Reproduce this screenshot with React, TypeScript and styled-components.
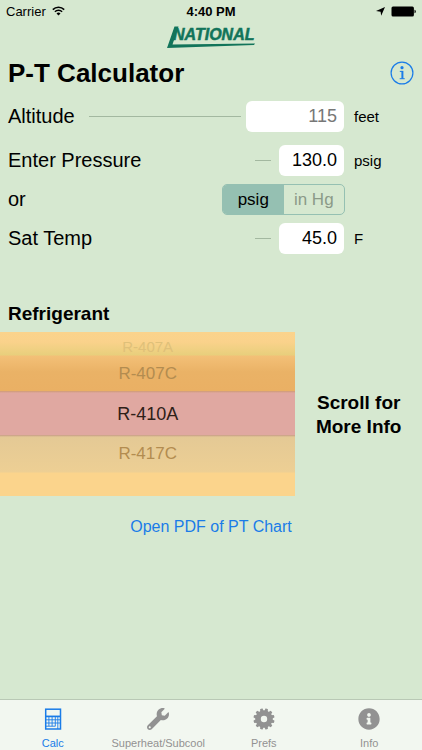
import React, { useState } from "react";
import styled, { createGlobalStyle, css } from "styled-components";
import { FaInfoCircle, FaLocationArrow, FaWrench } from "react-icons/fa";

const GlobalStyle = createGlobalStyle`
  *, *::before, *::after { box-sizing: border-box; }
  body {
    margin: 0;
    background: #d6e8d0;
    color: #000;
    font-family: "Liberation Sans", Arial, sans-serif;
  }
  button, input { font-family: inherit; }
`;

const Screen = styled.div`
  display: flex;
  flex-direction: column;
  min-height: 100vh;
`;

const StatusBar = styled.header`
  display: grid;
  grid-template-columns: 1fr auto 1fr;
  align-items: center;
  height: 22px;
  padding: 0 6px;
  font-size: 13px;
`;

const StatusGroup = styled.div<{ $end?: boolean }>`
  display: flex;
  align-items: center;
  gap: 6px;
  justify-content: ${(p) => (p.$end ? "flex-end" : "flex-start")};
`;

const Clock = styled.time`
  font-weight: 700;
`;

const Brand = styled.div`
  display: flex;
  justify-content: center;
  height: 28px;
`;

const Content = styled.main`
  display: flex;
  flex: 1;
  flex-direction: column;
`;

const TitleRow = styled.div`
  display: flex;
  align-items: center;
  justify-content: space-between;
  height: 46px;
  padding: 0 8px;
`;

const Title = styled.h1`
  margin: 0;
  font-size: 26px;
  line-height: 30px;
`;

const InfoButton = styled.button`
  display: flex;
  padding: 0;
  border: 0;
  background: none;
  color: #1a7ce8;
`;

const Form = styled.form`
  display: flex;
  flex-direction: column;
  gap: 8px;
  padding: 5px 0 0 8px;
`;

const Row = styled.div<{ $spaced?: boolean }>`
  display: flex;
  align-items: center;
  height: 31px;
  margin-bottom: ${(p) => (p.$spaced ? "5px" : "0")};
`;

const Label = styled.label`
  padding-bottom: 2px;
  font-size: 20px;
  line-height: 24px;
`;

const Rule = styled.span<{ $short?: boolean }>`
  height: 1px;
  background: #a3b8a0;
  ${(p) =>
    p.$short
      ? css`
          width: 16px;
          margin: 0 8px 0 auto;
        `
      : css`
          flex: 1;
          margin: 0 5px 0 14px;
        `}
`;

const Field = styled.input<{ $wide?: boolean }>`
  width: ${(p) => (p.$wide ? "98px" : "65px")};
  height: 31px;
  padding: 0 7px;
  border: 0;
  border-radius: 6px;
  background: #fff;
  color: #000;
  font-size: 18px;
  text-align: right;
  &:disabled { color: #777; }
`;

const Unit = styled.span`
  width: 78px;
  padding-left: 10px;
  font-size: 15px;
  line-height: 20px;
`;

const Segments = styled.div`
  display: flex;
  width: 123px;
  height: 31px;
  margin: 0 77px 0 auto;
  overflow: hidden;
  border: 1px solid #95c0b2;
  border-radius: 5px;
`;

const Segment = styled.label`
  display: flex;
  flex: 1;
  align-items: center;
  justify-content: center;
  color: #8b9a88;
  font-size: 17px;
  &:has(input:checked) { background: #95c0b2; color: #000; }
`;

const HiddenRadio = styled.input`
  position: absolute;
  width: 1px;
  height: 1px;
  margin: 0;
  opacity: 0;
`;

const SectionTitle = styled.h2`
  margin: 48px 0 6px 8px;
  font-size: 19px;
  line-height: 24px;
`;

const PickerRow = styled.section`
  display: flex;
  align-items: center;
`;

const Picker = styled.div`
  display: flex;
  flex-direction: column;
  width: 70%;
  height: 164px;
  padding-top: 6px;
  background: linear-gradient(
    #fbd38c 0, #fad28b 10px, #e8cf7c 23px,
    #f3c077 24px, #eab266 40px, #eab064 59px,
    #cf9b74 59px, #e0a8a1 61px, #e0a8a1 103px,
    #c79b86 103px, #e4c995 105px, #edcf94 140px,
    #fbd48c 141px, #fbd48c 164px
  );
`;

const tones = {
  edge: css`
    height: 18px;
    color: #dfc079;
    font-size: 15px;
    line-height: 18px;
  `,
  near: css`
    height: 36px;
    color: #b38c50;
    font-size: 17px;
  `,
  picked: css`
    height: 44px;
    color: #2e2018;
    font-size: 18px;
  `,
};

const Refrigerant = styled.button<{ $tone: keyof typeof tones }>`
  display: flex;
  flex: none;
  align-items: center;
  justify-content: center;
  padding: 0;
  border: 0;
  background: none;
  line-height: 20px;
  ${(p) => tones[p.$tone]}
`;

const Hint = styled.p`
  flex: 1;
  margin: 2px 0 0;
  padding: 0 14px;
  font-size: 19px;
  font-weight: 700;
  line-height: 24px;
  text-align: center;
`;

const ChartLink = styled.a`
  align-self: center;
  margin: 21px 0;
  color: #1a7ce8;
  font-size: 16px;
  line-height: 20px;
  text-decoration: none;
`;

const TabBar = styled.nav`
  display: grid;
  grid-template-columns: repeat(4, 1fr);
  height: 51px;
  border-top: 1px solid #b9c8b5;
  background: #f2f7f0;
`;

const Tab = styled.button<{ $active: boolean }>`
  display: flex;
  flex-direction: column;
  align-items: center;
  gap: 6px;
  padding: 8px 0 0;
  border: 0;
  background: none;
  color: ${(p) => (p.$active ? "#1a7ce8" : "#929292")};
  font-size: 11px;
  line-height: 14px;
  white-space: nowrap;
`;

function WifiIcon() {
  return (
    <svg width="13" height="10" viewBox="0 0 13 10" fill="none" stroke="#000" strokeWidth="1.6" aria-hidden="true">
      <path d="M0.8 3.6a8.1 8.1 0 0 1 11.4 0M2.9 5.8a5.1 5.1 0 0 1 7.2 0" />
      <path d="M6.5 9.6 4.5 7.5a2.9 2.9 0 0 1 4 0Z" fill="#000" stroke="none" />
    </svg>
  );
}

function LocationIcon() {
  return (
    <svg width="9" height="9" viewBox="0 0 9 9" aria-hidden="true">
      <path d="M9 0 5.2 8.8 4.6 4.7 0 4Z" />
    </svg>
  );
}

function BatteryIcon() {
  return (
    <svg width="25" height="11" viewBox="0 0 25 11" aria-label="Battery full" role="img">
      <rect x="0.5" y="0.5" width="22.4" height="10" rx="1.5" />
      <path d="M23.5 3.7c1 .4 1.3 1 1.3 1.8s-.3 1.4-1.3 1.8Z" />
    </svg>
  );
}

function BrandLogo() {
  return (
    <svg width="90" height="26" viewBox="0 0 90 26" role="img" aria-label="National">
      <path d="M8.5 4.5 1 26 88 23 89 21.4 6.5 22.4 12.5 4.5Z" fill="#12745a" />
      <text
        x="7"
        y="18"
        fill="#12745a"
        stroke="#12745a"
        strokeWidth="0.5"
        fontFamily="'Liberation Sans', Arial, sans-serif"
        fontSize="16"
        fontWeight="700"
        fontStyle="italic"
      >
        NATIONAL
      </text>
    </svg>
  );
}

function InfoIcon() {
  return (
    <svg width="24" height="24" viewBox="0 0 24 24" fill="none" stroke="currentColor" aria-hidden="true">
      <circle cx="12" cy="12" r="10.9" strokeWidth="1.2" />
      <circle cx="12" cy="6.7" r="1.6" fill="currentColor" stroke="none" />
      <path d="M12.4 9.9v7.8" strokeWidth="2" />
      <path d="M9.8 10.4h2.6M9.7 17.7h5" strokeWidth="1" />
    </svg>
  );
}

function CalculatorIcon() {
  return (
    <svg width="22" height="22" viewBox="0 0 22 22" fill="none" stroke="currentColor" aria-hidden="true">
      <rect x="3.7" y="1.2" width="14.8" height="19.8" strokeWidth="1.5" />
      <path d="M3 8.4h16" strokeWidth="1.7" />
      <path d="M3.6 11.8h14.8M3.6 15h14.8M3.6 18.2h9.8M6.9 8v10.2M10.1 8v10.2M13.3 8v10.2M15.8 8v13" strokeWidth="0.9" />
    </svg>
  );
}

function GearIcon() {
  const teeth = Array.from({ length: 12 }, (_, i) => i * 30 + 15);
  return (
    <svg width="22" height="22" viewBox="0 0 22 22" aria-hidden="true">
      <circle cx="11" cy="11" r="6" fill="none" stroke="currentColor" strokeWidth="5.6" />
      {teeth.map((angle) => (
        <path key={angle} d="M9.2 3.6 9.7.6q1.3-.5 2.6 0l.5 3Z" fill="currentColor" transform={`rotate(${angle} 11 11)`} />
      ))}
    </svg>
  );
}

const tabs = [
  { name: "Calc", icon: <CalculatorIcon /> },
  { name: "Superheat/Subcool", icon: <FaWrench size={22} /> },
  { name: "Prefs", icon: <GearIcon /> },
  { name: "Info", icon: <FaInfoCircle size={22} /> },
];

const refrigerants = [
  { name: "R-407A", tone: "edge" },
  { name: "R-407C", tone: "near" },
  { name: "R-410A", tone: "picked" },
  { name: "R-417C", tone: "near" },
] as const;

export default function App() {
  const [pressure, setPressure] = useState("130.0");
  const [temp, setTemp] = useState("45.0");
  const [unit, setUnit] = useState("psig");
  const [tab, setTab] = useState("Calc");

  return (
    <Screen>
      <GlobalStyle />
      <StatusBar>
        <StatusGroup>
          <span>Carrier</span>
          <WifiIcon />
        </StatusGroup>
        <Clock>4:40 PM</Clock>
        <StatusGroup $end>
          <LocationIcon />
          <BatteryIcon />
        </StatusGroup>
      </StatusBar>
      <Brand>
        <BrandLogo />
      </Brand>
      <Content>
        <TitleRow>
          <Title>P-T Calculator</Title>
          <InfoButton type="button" aria-label="About this calculator">
            <InfoIcon />
          </InfoButton>
        </TitleRow>
        <Form>
          <Row $spaced>
            <Label htmlFor="altitude">Altitude</Label>
            <Rule />
            <Field id="altitude" $wide disabled value="115" readOnly />
            <Unit>feet</Unit>
          </Row>
          <Row>
            <Label htmlFor="pressure">Enter Pressure</Label>
            <Rule $short />
            <Field id="pressure" value={pressure} onChange={(e) => setPressure(e.target.value)} />
            <Unit>psig</Unit>
          </Row>
          <Row>
            <Label as="span">or</Label>
            <Segments role="radiogroup" aria-label="Pressure unit">
              {["psig", "in Hg"].map((name) => (
                <Segment key={name}>
                  <HiddenRadio type="radio" name="unit" checked={unit === name} onChange={() => setUnit(name)} />
                  {name}
                </Segment>
              ))}
            </Segments>
          </Row>
          <Row>
            <Label htmlFor="temp">Sat Temp</Label>
            <Rule $short />
            <Field id="temp" value={temp} onChange={(e) => setTemp(e.target.value)} />
            <Unit>F</Unit>
          </Row>
        </Form>
        <SectionTitle>Refrigerant</SectionTitle>
        <PickerRow>
          <Picker role="listbox" aria-label="Refrigerant">
            {refrigerants.map(({ name, tone }) => (
              <Refrigerant key={name} type="button" role="option" aria-selected={tone === "picked"} $tone={tone}>
                {name}
              </Refrigerant>
            ))}
          </Picker>
          <Hint>
            Scroll for
            <br />
            More Info
          </Hint>
        </PickerRow>
        <ChartLink href="#chart">Open PDF of PT Chart</ChartLink>
      </Content>
      <TabBar>
        {tabs.map(({ name, icon }) => (
          <Tab key={name} type="button" $active={tab === name} onClick={() => setTab(name)}>
            {icon}
            {name}
          </Tab>
        ))}
      </TabBar>
    </Screen>
  );
}
